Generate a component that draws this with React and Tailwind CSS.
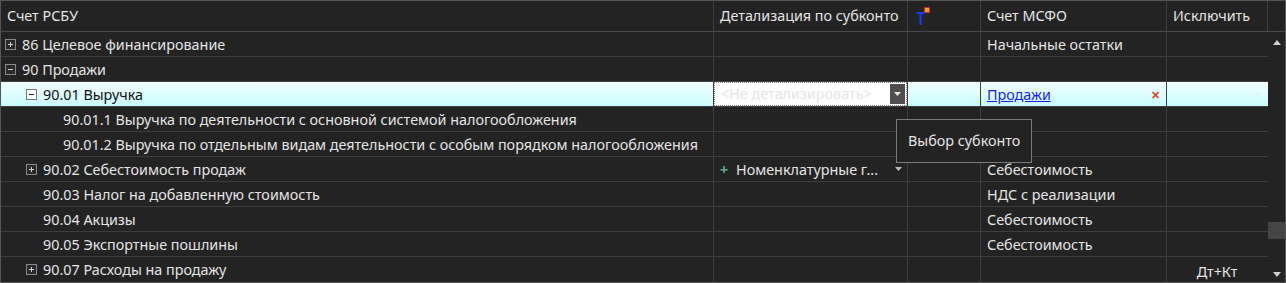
import React from "react";

const rows = [
  { level: 0, box: "plus", text: "86 Целевое финансирование", msfo: "Начальные остатки" },
  { level: 0, box: "minus", text: "90 Продажи" },
  { level: 1, box: "minus", text: "90.01 Выручка", selected: true, msfo: "Продажи" },
  { level: 2, text: "90.01.1 Выручка по деятельности с основной системой налогообложения" },
  { level: 2, text: "90.01.2 Выручка по отдельным видам деятельности с особым порядком налогообложения" },
  { level: 1, box: "plus", text: "90.02 Себестоимость продаж", detail: "Номенклатурные г...", msfo: "Себестоимость" },
  { level: 1, text: "90.03 Налог на добавленную стоимость", msfo: "НДС с реализации" },
  { level: 1, text: "90.04 Акцизы", msfo: "Себестоимость" },
  { level: 1, text: "90.05 Экспортные пошлины", msfo: "Себестоимость" },
  { level: 1, box: "plus", text: "90.07 Расходы на продажу", exclude: "Дт+Кт" },
];

const Box = ({ type, dark }) => (
  <span
    className={`relative inline-block w-[11px] h-[11px] border shrink-0 ${
      dark ? "border-[#777] bg-white" : "border-[#8a8a8a] bg-[#2a2a2a]"
    }`}
  >
    <span className={`absolute left-[2px] top-[4px] w-[5px] h-[1px] ${dark ? "bg-[#222]" : "bg-[#d0d0d0]"}`} />
    {type === "plus" && (
      <span className={`absolute left-[4px] top-[2px] w-[1px] h-[5px] ${dark ? "bg-[#222]" : "bg-[#d0d0d0]"}`} />
    )}
  </span>
);

const SortIcon = () => (
  <svg width="22" height="26" viewBox="0 0 22 26">
    <path d="M5.5 12h8M9.5 12v12" stroke="#1a3cff" strokeWidth="2" fill="none" />
    <rect x="13.5" y="6.5" width="5" height="5" fill="#ff9a1a" stroke="#e21b1b" strokeWidth="1" strokeDasharray="1 1" />
  </svg>
);

const Caret = ({ color = "#bdbdbd" }) => (
  <svg width="7" height="4" viewBox="0 0 7 4">
    <path d="M0 0h7L3.5 4z" fill={color} />
  </svg>
);

const cell = "h-full border-r border-[#3d3d3d] flex items-center";

export default function App() {
  return (
    <div
      className="relative w-[1286px] h-[283px] bg-[#232323] border border-[#555] text-[#e4e4e4] text-[14.35px] overflow-hidden flex flex-col"
      style={{ fontFamily: '"Noto Sans", "Open Sans", sans-serif' }}
    >
      {/* header */}
      <div className="h-[31px] flex border-b border-[#4a4a4a] shrink-0">
        <div className={`${cell} w-[713px] px-[6px]`}>Счет РСБУ</div>
        <div className={`${cell} w-[194px] px-[6px]`}>Детализация по субконто</div>
        <div className={`${cell} w-[73px] px-[3px] items-start`}>
          <SortIcon />
        </div>
        <div className={`${cell} w-[186px] px-[6px]`}>Счет МСФО</div>
        <div className={`${cell} w-[101px] px-[6px]`}>Исключить</div>
        <div className="flex-1" />
      </div>

      {/* body */}
      <div className="flex flex-1 min-h-0">
        <div className="flex flex-col w-[1267px]">
          {rows.map((r, i) => (
            <div
              key={i}
              className={`h-[25px] flex shrink-0 ${i < rows.length - 1 ? "border-b border-[#3d3d3d]" : ""} ${
                r.selected ? "bg-gradient-to-b from-[#f4ffff] to-[#c8fcfc] text-[#111]" : ""
              }`}
            >
              <div className={`${cell} w-[713px] whitespace-nowrap pt-[1px]`}>
                <div
                  className={`flex items-center gap-[6px] ${
                    r.level === 0 ? "pl-[4px]" : r.level === 1 ? (r.box ? "pl-[25px]" : "pl-[42px]") : "pl-[62px]"
                  }`}
                >
                  {r.box && <Box type={r.box} dark={r.selected} />}
                  <span>{r.text}</span>
                </div>
              </div>
              <div className={`${cell} w-[194px]`}>
                {r.selected && (
                  <div className="w-full h-[24px] bg-white border border-dotted border-[#888] flex items-center justify-between pl-[6px] pr-[1px]">
                    <span className="text-[#e6e6e6]">&lt;Не детализировать&gt;</span>
                    <span className="w-[15px] h-[20px] bg-[#4e4e4e] flex items-center justify-center">
                      <Caret color="#e8e8e8" />
                    </span>
                  </div>
                )}
                {r.detail && (
                  <div className="w-full flex items-center justify-between pl-[6px] pr-[5px] pt-[1px]">
                    <span className="flex items-center">
                      <span className="text-[#5fae8a] font-bold w-[16px]">+</span>
                      <span>{r.detail}</span>
                    </span>
                    <Caret />
                  </div>
                )}
              </div>
              <div className={`${cell} w-[73px]`} />
              <div className={`${cell} w-[186px] px-[6px] pt-[1px] justify-between`}>
                {r.selected ? (
                  <>
                    <span className="text-[#1a1aff] underline">{r.msfo}</span>
                    <span className="text-[#e8401a] text-[11px] font-bold leading-none">✕</span>
                  </>
                ) : (
                  <span>{r.msfo}</span>
                )}
              </div>
              <div className="h-full w-[100px] flex items-center justify-center relative">
                {r.exclude && <span className="pt-[4px]">{r.exclude}</span>}
                {r.selected && (
                  <span className="absolute right-[6px] top-[10px]">
                    <Caret color="#e4f4f4" />
                  </span>
                )}
              </div>
            </div>
          ))}
        </div>

        {/* scrollbar */}
        <div className="flex-1 relative">
          <span className="absolute left-[5px] top-[8px]">
            <svg width="8" height="5" viewBox="0 0 8 5">
              <path d="M0 5h8L4 0z" fill="#cfcfcf" />
            </svg>
          </span>
          <div className="absolute left-0 right-0 top-[190px] h-[17px] bg-[#454545]" />
          <span className="absolute left-[5px] bottom-[5px]">
            <svg width="8" height="5" viewBox="0 0 8 5">
              <path d="M0 0h8L4 5z" fill="#cfcfcf" />
            </svg>
          </span>
        </div>
      </div>

      {/* tooltip */}
      <div className="absolute left-[895px] top-[118px] w-[136px] h-[44px] bg-[#232323] border border-[#7a7a7a] flex items-center pl-[11px]">
        Выбор субконто
      </div>
    </div>
  );
}
